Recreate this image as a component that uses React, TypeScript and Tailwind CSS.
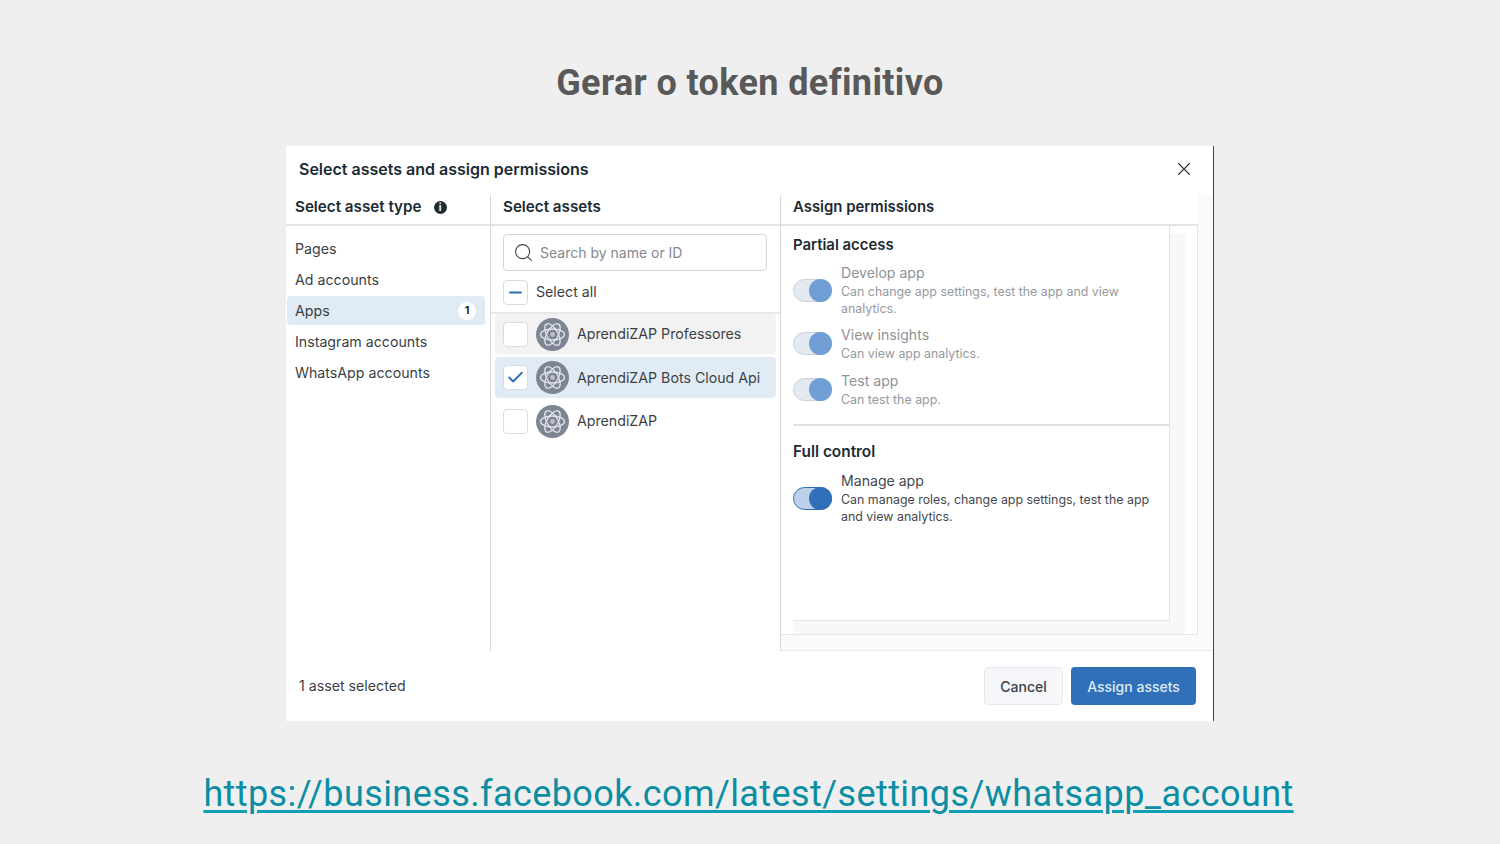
import { X, Search, Check, Minus } from "lucide-react";

const assetTypes = ["Pages", "Ad accounts", "Apps", "Instagram accounts", "WhatsApp accounts"];

const AppIcon = () => (
  <div className="w-[33px] h-[33px] rounded-full bg-[#7d8595] flex items-center justify-center shrink-0">
    <svg width="29" height="29" viewBox="0 0 29 29" fill="none" stroke="#e3e5ea" strokeWidth="1.3">
      <ellipse cx="14.5" cy="14.5" rx="12" ry="5.5" />
      <ellipse cx="14.5" cy="14.5" rx="12" ry="5.5" transform="rotate(60 14.5 14.5)" />
      <ellipse cx="14.5" cy="14.5" rx="12" ry="5.5" transform="rotate(120 14.5 14.5)" />
      <circle cx="14.5" cy="14.5" r="2.4" fill="#b9bec8" stroke="none" />
    </svg>
  </div>
);

const CheckBox = ({ children }: { children?: React.ReactNode }) => (
  <div className="w-[25px] h-[25px] rounded-[4px] bg-white border border-[#d9dbdf] flex items-center justify-center shrink-0">
    {children}
  </div>
);

const AssetRow = ({ name, bg, checked, h }: { name: string; bg: string; checked?: boolean; h: string }) => (
  <div className={`flex items-center pl-2 rounded-[4px] ${bg} ${h}`}>
    <CheckBox>{checked && <Check size={19} strokeWidth={2.4} className="text-[#2f6fb5]" />}</CheckBox>
    <div className="ml-2"><AppIcon /></div>
    <span className="ml-2 text-[14.2px] text-[#3b3f45]">{name}</span>
  </div>
);

const Toggle = ({ disabled }: { disabled?: boolean }) => (
  <div className={`relative w-[39px] h-[23px] rounded-full border shrink-0 ${disabled ? "bg-[#e3e9f1] border-[#ccd1d8]" : "bg-[#bcd0ea] border-[#2f6fb5]"}`}>
    <div className={`absolute right-[-1px] top-[-1px] w-[23px] h-[23px] rounded-full ${disabled ? "bg-[#6f9fd4]" : "bg-[#2f70b8]"}`} />
  </div>
);

const Permission = ({ title, desc, disabled, className }: { title: string; desc: React.ReactNode; disabled?: boolean; className?: string }) => (
  <div className={`flex ${className ?? ""}`}>
    <div className="flex items-center h-fit">
      <Toggle disabled={disabled} />
      <div className="ml-[9px]">
        <div className={`text-[14.1px] leading-[20px] ${disabled ? "text-[#8f9297]" : "text-[#44484e]"}`}>{title}</div>
        <div className={`text-[12.4px] leading-[17px] ${disabled ? "text-[#96999e]" : "text-[#44484e]"}`}>{desc}</div>
      </div>
    </div>
  </div>
);

export default function App() {
  return (
    <div className="w-[1500px] h-[844px] bg-[#efefef] flex flex-col items-center overflow-hidden font-['Inter',sans-serif]">
      <h1 className="mt-[62px] h-[43px] leading-[43px] text-[36px] tracking-[0.38px] font-bold text-[#595959] font-['Roboto',sans-serif]">Gerar o token definitivo</h1>

      <div className="mt-[41px] w-[928px] h-[575px] bg-white border-r border-[#444] flex flex-col">
        {/* header */}
        <div className="h-[49px] shrink-0 flex items-center justify-between pl-[13px] pr-[18px] pb-[3px]">
          <span className="text-[16px] font-semibold text-[#1c2b33]">Select assets and assign permissions</span>
          <X size={22} strokeWidth={1.2} className="text-[#333]" />
        </div>

        {/* columns */}
        <div className="h-[456px] flex shrink-0">
          <div className="w-[205px] shrink-0 border-r border-[#d9d9d9]">
            <div className="h-[31px] border-b-2 border-[#e4e4e4] pl-[9px] pb-[4px] flex items-center text-[15.2px] font-semibold text-[#1c2b33]">
              Select asset type
              <span className="ml-[12px] w-[13px] h-[13px] rounded-full bg-[#1c2b33] text-white text-[10px] font-bold flex items-center justify-center">i</span>
            </div>
            <div className="pt-[8px] pl-[1px] pr-[5px] flex flex-col">
              {assetTypes.map((t) => (
                <div
                  key={t}
                  className={`h-[29px] mb-[2px] flex items-center justify-between pl-[8px] pr-[9px] rounded-[4px] text-[14.2px] text-[#3b3f45] ${t === "Apps" ? "bg-[#e1ebf5]" : ""}`}
                >
                  {t}
                  {t === "Apps" && (
                    <span className="w-[18px] h-[18px] rounded-full bg-white text-[11px] font-bold text-[#1c2b33] flex items-center justify-center">1</span>
                  )}
                </div>
              ))}
            </div>
          </div>

          <div className="w-[290px] shrink-0 border-r border-[#d9d9d9]">
            <div className="h-[31px] border-b-2 border-[#e4e4e4] pl-[12px] pb-[4px] flex items-center text-[15.2px] font-semibold text-[#1c2b33]">Select assets</div>
            <div className="mt-[8px] ml-[12px] mr-[13px] h-[37px] border border-[#d2d4d8] rounded-[4px] flex items-center pl-[9px]">
              <Search size={21} strokeWidth={1.2} className="text-[#444]" />
              <span className="ml-[6px] text-[14px] text-[#85888d]">Search by name or ID</span>
            </div>
            <div className="h-[43px] pl-[12px] pt-[1px] flex items-center border-b-2 border-[#e8e8e8]">
              <CheckBox><Minus size={19} strokeWidth={2.4} className="text-[#2f6fb5]" /></CheckBox>
              <span className="ml-[8px] text-[14.2px] text-[#3b3f45]">Select all</span>
            </div>
            <div className="pl-[4px] pr-[4px] flex flex-col">
              <AssetRow name="AprendiZAP Professores" bg="bg-[#f2f2f2]" h="h-[40px]" />
              <div className="h-[3px]" />
              <AssetRow name="AprendiZAP Bots Cloud Api" bg="bg-[#e1ebf5]" h="h-[41px]" checked />
              <AssetRow name="AprendiZAP" bg="" h="h-[46px]" />
            </div>
          </div>

          <div className="flex-1 min-w-0 flex border-b border-[#e8e8e8]">
            <div className="w-[417px] shrink-0 flex flex-col bg-[#fafafa]">
              <div className="h-[31px] shrink-0 bg-white border-b-2 border-[#e4e4e4] pl-[12px] pb-[4px] flex items-center text-[14.9px] font-semibold text-[#1c2b33]">Assign permissions</div>
              <div className="flex h-[409px] shrink-0 bg-white border-b border-r border-[#e6e6e6]">
                <div className="w-[404px] flex flex-col">
                  <div className="flex shrink-0 h-[395px]">
                    <div className="ml-[12px] w-[377px] flex shrink-0 border-b border-r border-[#e4e4e4] flex-col">
                      <div className="h-[37px] pt-[9px] text-[14.9px] font-semibold leading-[20px] text-[#1c2b33]">Partial access</div>
                      <Permission
                        disabled
                        className="h-[62px]"
                        title="Develop app"
                        desc={<>Can change app settings, test the app and view<br />analytics.</>}
                      />
                      <Permission disabled className="h-[46px]" title="View insights" desc="Can view app analytics." />
                      <Permission disabled className="h-[53px]" title="Test app" desc="Can test the app." />
                      <div className="border-t-2 border-[#e0e0e0] h-[18px] shrink-0" />
                      <div className="h-[20px] leading-[20px] text-[15.4px] font-semibold text-[#1c2b33] shrink-0">Full control</div>
                      <Permission
                        className="mt-[9px]"
                        title="Manage app"
                        desc={<>Can manage roles, change app settings, test the app<br />and view analytics.</>}
                      />
                    </div>
                    <div className="w-[15px] mt-[8px] bg-[#f8f8f8]" />
                  </div>
                  <div className="ml-[12px] flex-1 bg-[#f8f8f8]" />
                </div>
              </div>
            </div>
            <div className="flex-1 bg-[#fafafa]" />
          </div>
        </div>

        {/* footer */}
        <div className="flex-1 flex items-center justify-between pl-[13px] pr-[17px]">
          <span className="text-[14.2px] text-[#3b3f45]">1 asset selected</span>
          <div className="flex gap-[8px]">
            <button className="w-[79px] h-[38px] rounded-[4px] bg-[#f5f7fa] border border-[#e6e8ec] text-[14px] font-medium text-[#3b3f45]">Cancel</button>
            <button className="w-[125px] h-[38px] rounded-[4px] bg-[#2f70b8] text-[14px] font-medium text-[#dfe9f5]">Assign assets</button>
          </div>
        </div>
      </div>

      <a className="mt-[46px] mr-[3px] text-[36px] leading-[54px] tracking-[0.41px] font-['Roboto',sans-serif] font-normal text-[#0b8ea3] underline decoration-[3px] underline-offset-[4px] decoration-[#0ea0b4]">
        https://business.facebook.com/latest/settings/whatsapp_account
      </a>
    </div>
  );
}
